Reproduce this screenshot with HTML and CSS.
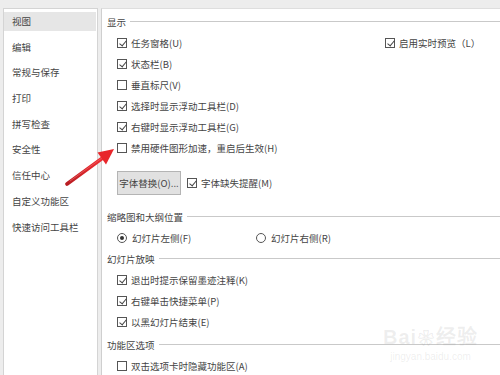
FILE: index.html
```html
<!DOCTYPE html>
<html lang="zh-CN">
<head>
<meta charset="utf-8">
<title>选项</title>
<link rel="stylesheet" href="styles.css">
</head>
<body>
<div class="dialog">
  <nav class="nav">
    <div class="nav-item active">视图</div>
    <div class="nav-item">编辑</div>
    <div class="nav-item">常规与保存</div>
    <div class="nav-item">打印</div>
    <div class="nav-item">拼写检查</div>
    <div class="nav-item">安全性</div>
    <div class="nav-item">信任中心</div>
    <div class="nav-item">自定义功能区</div>
    <div class="nav-item">快速访问工具栏</div>
  </nav>
  <main class="main">
    <div class="section-title"><span>显示</span></div>
    <div class="row two-col">
      <label class="opt"><span class="cb on"></span>任务窗格(U)</label>
      <label class="opt"><span class="cb on"></span>启用实时预览（L）</label>
    </div>
    <div class="row"><label class="opt"><span class="cb on"></span>状态栏(B)</label></div>
    <div class="row"><label class="opt"><span class="cb"></span>垂直标尺(V)</label></div>
    <div class="row"><label class="opt"><span class="cb on"></span>选择时显示浮动工具栏(D)</label></div>
    <div class="row"><label class="opt"><span class="cb on"></span>右键时显示浮动工具栏(G)</label></div>
    <div class="row"><label class="opt"><span class="cb"></span>禁用硬件图形加速，重启后生效(H)</label></div>
    <div class="button-row">
      <span class="btn">字体替换(O)...</span>
      <label class="opt"><span class="cb on"></span>字体缺失提醒(M)</label>
    </div>
    <div class="section-title gap-top"><span>缩略图和大纲位置</span></div>
    <div class="row radio-col">
      <label class="opt"><span class="rb on"></span>幻灯片左侧(F)</label>
      <label class="opt"><span class="rb"></span>幻灯片右侧(R)</label>
    </div>
    <div class="section-title"><span>幻灯片放映</span></div>
    <div class="row"><label class="opt"><span class="cb on"></span>退出时提示保留墨迹注释(K)</label></div>
    <div class="row"><label class="opt"><span class="cb on"></span>右键单击快捷菜单(P)</label></div>
    <div class="row"><label class="opt"><span class="cb on"></span>以黑幻灯片结束(E)</label></div>
    <div class="section-title gap-small"><span>功能区选项</span></div>
    <div class="row"><label class="opt"><span class="cb"></span>双击选项卡时隐藏功能区(A)</label></div>
  </main>
</div>

<svg class="arrow" width="130" height="200" viewBox="0 0 130 200" aria-hidden="true">
  <defs>
    <linearGradient id="ag" x1="0" y1="1" x2="1" y2="0">
      <stop offset="0" stop-color="#b81d22"/>
      <stop offset="0.6" stop-color="#e0262b"/>
      <stop offset="1" stop-color="#f03035"/>
    </linearGradient>
  </defs>
  <line x1="67" y1="184" x2="104" y2="157" stroke="url(#ag)" stroke-width="3.8" stroke-linecap="round"/>
  <line x1="70" y1="181" x2="102" y2="158" stroke="#f07a7c" stroke-width="0.8" stroke-linecap="round" opacity="0.7"/>
  <polygon points="114,149 97.5,152.5 106,164.5" fill="#e8262b"/>
</svg>

<div class="watermark">
  <div class="wm-top">Bai<span class="paw">❀</span>经验</div>
  <div class="wm-url">jingyan.baidu.com</div>
</div>
</body>
</html>
```

FILE: styles.css
```css
* { box-sizing: border-box; }

html, body {
  margin: 0;
  width: 500px;
  height: 375px;
  overflow: hidden;
}

body {
  background: #ededed;
  font-family: "Noto Sans CJK SC", "Noto Sans", sans-serif;
  font-size: 9.5px;
  color: #444;
  position: relative;
}

.dialog {
  display: flex;
  padding-top: 8px;
  height: 375px;
}

.nav {
  margin-left: 3px;
  width: 95px;
  height: 100%;
  background: #fff;
  border: 1px solid #d4d4d4;
  border-bottom: none;
  display: flex;
  flex-direction: column;
  gap: 6.7px;
  padding-top: 3px;
}

.nav-item {
  height: 19px;
  line-height: 19px;
  padding-left: 8px;
  margin-right: 1px;
  white-space: nowrap;
}

.nav-item.active {
  background: #e6e6e6;
}

.main {
  flex: 1;
  margin-left: 3px;
  height: 100%;
  background: #fff;
  border-left: 1px solid #cfcfcf;
  border-top: 1px solid #dedede;
  padding-top: 2px;
  padding-left: 5px;
}

.section-title {
  height: 21px;
  display: flex;
  align-items: center;
  white-space: nowrap;
}

.section-title::after {
  content: "";
  flex: 1;
  border-top: 1px solid #c9c9c9;
  margin-left: 4px;
  margin-top: -1px;
}

.section-title.gap-top { margin-top: 11px; }
.section-title.gap-small { margin-top: 2px; }

.row {
  height: 21px;
  display: flex;
  align-items: center;
  padding-left: 10px;
}

.row.two-col {
  display: grid;
  grid-template-columns: 268px 1fr;
}

.row.radio-col {
  display: grid;
  grid-template-columns: 139px 1fr;
}

.opt {
  display: inline-flex;
  align-items: center;
  white-space: nowrap;
}

.cb {
  width: 10px;
  height: 10px;
  border: 1px solid #555;
  background: #fff;
  margin-right: 4px;
  position: relative;
  flex: none;
}

.cb.on::after {
  content: "";
  position: absolute;
  left: 2.5px;
  top: 0px;
  width: 3px;
  height: 6px;
  border-right: 1px solid #444;
  border-bottom: 1px solid #444;
  transform: rotate(40deg);
}

.rb {
  width: 10px;
  height: 10px;
  border: 1px solid #555;
  border-radius: 50%;
  margin-right: 5px;
  position: relative;
  flex: none;
  background: #fff;
}

.rb.on::after {
  content: "";
  position: absolute;
  left: 2px;
  top: 2px;
  width: 4px;
  height: 4px;
  border-radius: 50%;
  background: #333;
}

.button-row {
  display: flex;
  align-items: center;
  margin-top: 13px;
  padding-left: 10px;
  gap: 6px;
}

.btn {
  width: 64px;
  height: 24px;
  background: #e1e1e1;
  border: 1px solid #b4b4b4;
  display: flex;
  align-items: center;
  justify-content: center;
  white-space: nowrap;
}

.arrow {
  position: absolute;
  left: 0;
  top: 0;
  pointer-events: none;
}

.watermark {
  position: absolute;
  left: 383px;
  top: 326px;
  color: rgba(150, 150, 150, 0.16);
  pointer-events: none;
  text-align: center;
}

.wm-top {
  font-family: "Liberation Sans", sans-serif;
  font-size: 20px;
  font-weight: bold;
  line-height: 22px;
  letter-spacing: 1px;
}

.paw {
  font-size: 16px;
  margin: 0 1px;
}

.wm-url {
  font-family: "Liberation Sans", sans-serif;
  font-size: 10px;
  line-height: 14px;
}
```
